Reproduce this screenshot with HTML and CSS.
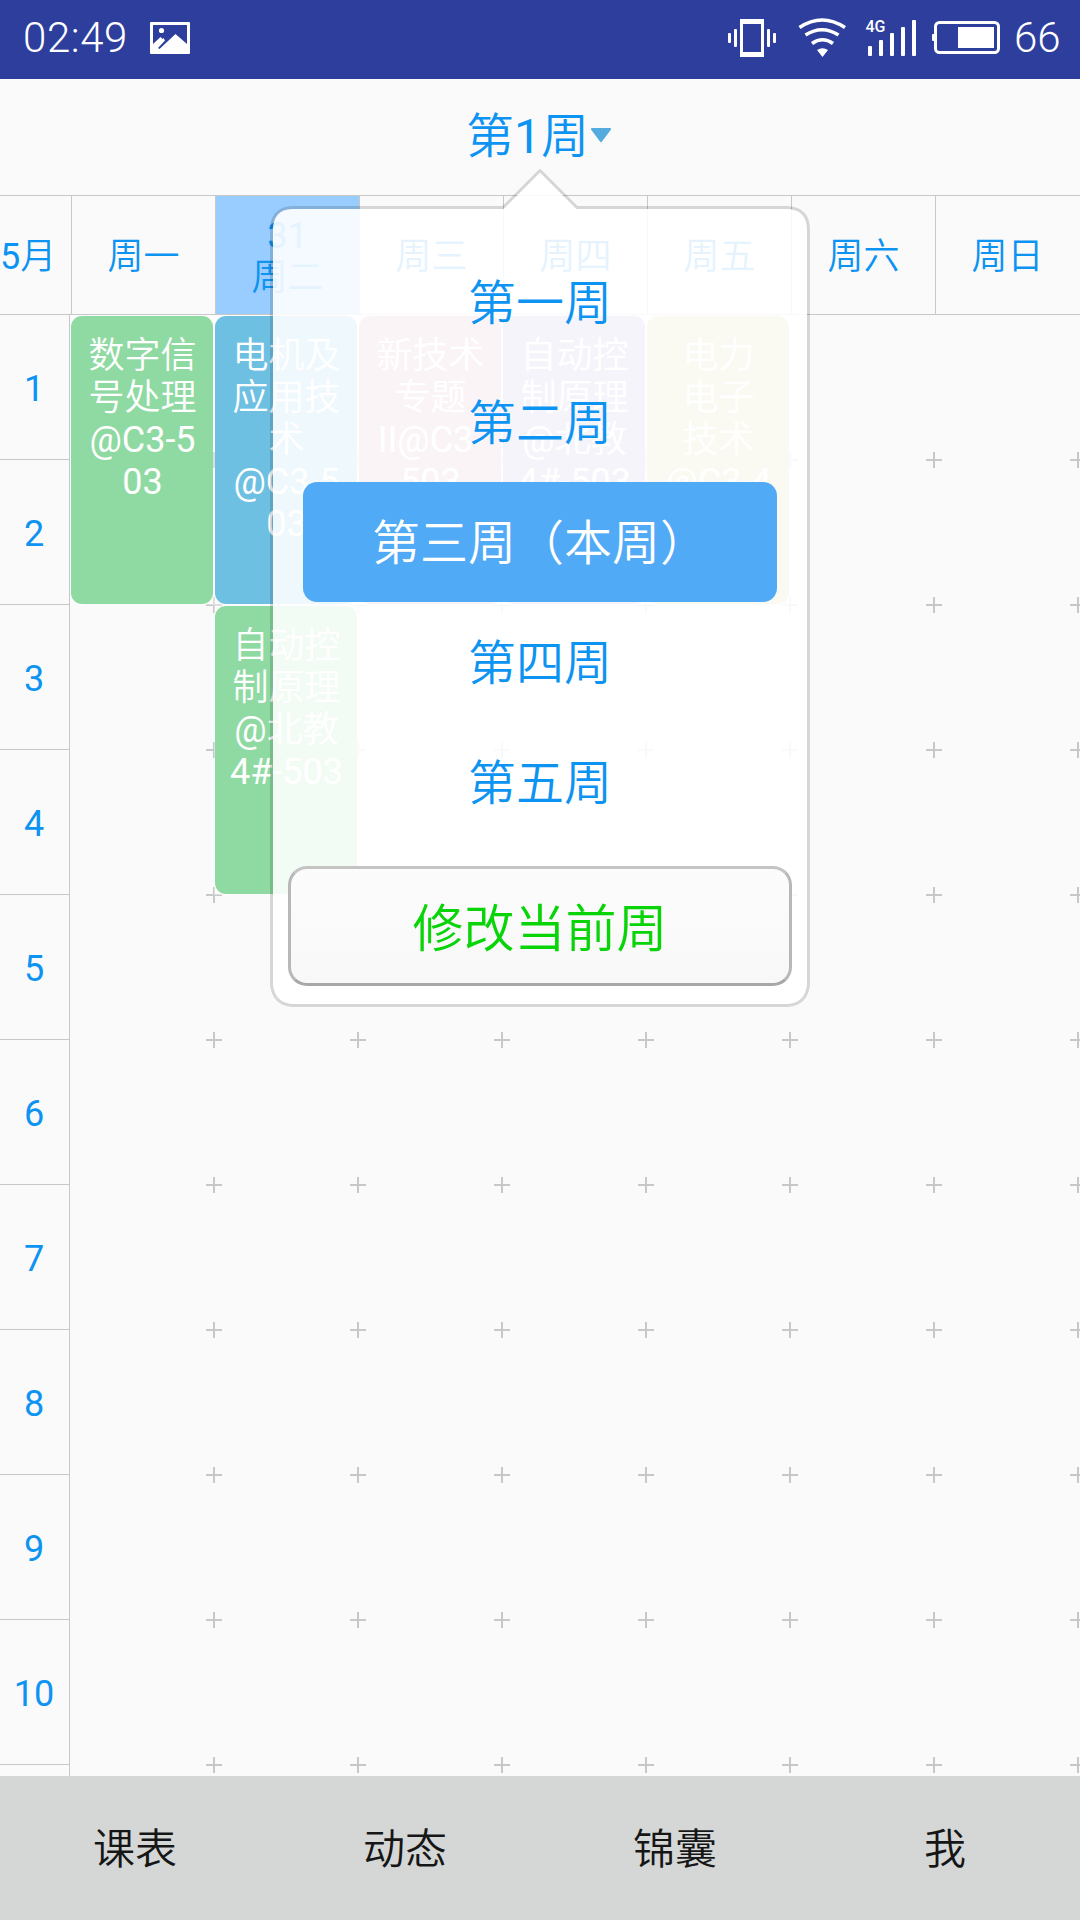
FILE: index.html
```html
<!DOCTYPE html>
<html lang="zh-CN">
<head>
<meta charset="utf-8">
<title>课表</title>
<link rel="stylesheet" href="styles.css">
</head>
<body>
<div class="screen">
  <header class="status">
    <span class="clock">02:49</span>
    <svg class="status-photo" width="40" height="32" viewBox="0 0 40 32">
      <path fill="#fff" fill-rule="evenodd" d="M1 0H39Q40 0 40 1V31Q40 32 39 32H1Q0 32 0 31V1Q0 0 1 0ZM3 3V22L10.500 15 12.500 17 13.500 16 15 18.500 8 26 9.500 27 25.500 12 37 22V3Z"/>
      <circle cx="11.500" cy="8.500" r="2.600" fill="#fff"/>
    </svg>
    <svg class="status-icons" width="274" height="40" viewBox="728 18 274 40" fill="#fff">
      <path fill-rule="evenodd" d="M740 19H764V57H740ZM743 24V52H761V24Z"/>
      <rect x="734" y="29" width="3" height="18" rx="1"/><rect x="728" y="33" width="3" height="10" rx="1"/>
      <rect x="767" y="29" width="3" height="18" rx="1"/><rect x="773" y="33" width="3" height="10" rx="1"/>
      <g fill="none" stroke="#fff" stroke-width="3.600">
        <path d="M799.500 27.500Q822 12.500 845 27.500"/>
        <path d="M805.500 35Q822 24.500 838.500 35"/>
        <path d="M812 43.500Q822.500 36 833 43.500"/>
      </g>
      <path d="M817 50Q822.500 46.500 828 50L822.500 57Z"/>
      <text class="net" x="865.500" y="32">4G</text>
      <rect x="868" y="46" width="4" height="10" rx="1"/><rect x="879" y="40" width="4" height="16" rx="1"/>
      <rect x="890" y="33" width="4" height="23" rx="1"/><rect x="901" y="27" width="4" height="29" rx="1"/>
      <rect x="912" y="20" width="4" height="36" rx="1"/>
      <rect x="935.500" y="22.500" width="63" height="30" rx="4" fill="none" stroke="#fff" stroke-width="3"/>
      <rect x="932" y="34" width="3" height="7" rx="1"/>
      <rect x="958" y="27" width="36" height="21"/>
    </svg>
    <span class="level">66</span>
  </header>

  <div class="titlebar">
    <span>第<span class="num">1</span>周</span>
    <svg class="caret" width="22" height="16" viewBox="0 0 22 16"><path d="M2 1H20Q21.500 1 21 2.500L12 14.500Q11 16 10 14.500L1 2.500Q.5 1 2 1Z" fill="#55aae0"/></svg>
  </div>

  <div class="days">
    <div class="month"><span class="num">5</span>月</div>
    <div class="day">周一</div>
    <div class="day today"><span class="num">31</span><span>周二</span></div>
    <div class="day">周三</div>
    <div class="day">周四</div>
    <div class="day">周五</div>
    <div class="day">周六</div>
    <div class="day">周日</div>
  </div>

  <main class="table">
    <div class="periods">
      <div>1</div><div>2</div><div>3</div><div>4</div><div>5</div><div>6</div><div>7</div><div>8</div><div>9</div><div>10</div><div></div>
    </div>
    <div class="board">
      <svg class="marks" width="938" height="1389">
        <defs><pattern id="plus" width="144" height="145" patternUnits="userSpaceOnUse"><path d="M64 72H80V74H64ZM71 65H73V81H71Z" fill="#c8c8c8"/></pattern></defs>
        <rect width="938" height="1389" fill="url(#plus)"/>
      </svg>
      <div class="column"><div class="slot"><div class="course green">数字信<br>号处理<br><span class="num">@C3-5</span><br><span class="num">03</span></div></div></div>
      <div class="column">
        <div class="slot"><div class="course cyan">电机及<br>应用技<br>术<br><span class="num">@C3-5</span><br><span class="num">03</span></div></div>
        <div class="slot"><div class="course green">自动控<br>制原理<br><span class="num">@</span>北教<br><span class="num">4#-503</span></div></div>
      </div>
      <div class="column"><div class="slot"><div class="course pink">新技术<br>专题<br><span class="num">II@C3-</span><br><span class="num">503</span></div></div></div>
      <div class="column"><div class="slot"><div class="course violet">自动控<br>制原理<br><span class="num">@</span>北教<br><span class="num">4#-503</span></div></div></div>
      <div class="column"><div class="slot"><div class="course olive">电力<br>电子<br>技术<br><span class="num">@C3-4</span></div></div></div>
      <div class="column"></div>
      <div class="column"></div>
    </div>
  </main>

  <nav class="tabs"><span>课表</span><span>动态</span><span>锦囊</span><span>我</span></nav>

  <div class="popup">
    <svg class="bubble" width="540" height="842" viewBox="0 0 540 842">
      <path fill="#fff" fill-opacity=".89" d="M22 42H233.500L270 6 306.500 42H518Q537 42 537 63V818Q537 837 518 837H22Q3 837 3 818V63Q3 42 22 42Z"/>
      <path fill="none" stroke="#000" stroke-opacity=".14" stroke-width="3" stroke-linejoin="round" d="M22 40.500H233L270 3.500 307 40.500H518Q538.500 42 538.500 63V818Q536 837 518 838.500H22Q4 837 1.500 818V63Q1.500 42 22 40.500Z"/>
    </svg>
    <div class="weeks">
      <div class="week">第一周</div>
      <div class="week">第二周</div>
      <div class="week current">第三周（本周）</div>
      <div class="week">第四周</div>
      <div class="week">第五周</div>
    </div>
    <div class="change">修改当前周</div>
  </div>
</div>
</body>
</html>
```
FILE: styles.css
```css
* { box-sizing: border-box; }
body { margin: 0; }
.screen {
  position: relative;
  width: 1080px;
  height: 1920px;
  overflow: hidden;
  display: flex;
  flex-direction: column;
  background: #fafafa;
  color: #0d93f2;
  font-family: Roboto, "Noto Sans CJK SC", sans-serif;
  font-weight: 350;
  font-size: 36px;
  line-height: 42px;
}
.num { font-weight: 400; }
.status {
  flex: none;
  height: 79px;
  display: flex;
  align-items: center;
  padding: 0 18px 3px 23px;
  background: #2d3e9d;
  color: #fff;
  font-size: 42px;
}
.clock { width: 127px; letter-spacing: .6px; }
.status-icons { margin-left: auto; }
.net { font: 500 16px Roboto, sans-serif; }
.level { width: 48px; margin-left: 12px; white-space: nowrap; }
.titlebar {
  flex: none;
  height: 116px;
  display: flex;
  align-items: center;
  justify-content: center;
  padding-right: 2px;
  font-size: 48px;
  line-height: 56px;
}
.caret { margin: 0 0 5px 1px; }
.days {
  flex: none;
  height: 120px;
  display: flex;
  border-top: 1px solid #c8c8c8;
  border-bottom: 1px solid #c8c8c8;
}
.month { width: 71px; display: flex; align-items: center; white-space: nowrap; padding-top: 4px; }
.day {
  width: 144px;
  display: flex;
  flex-direction: column;
  align-items: center;
  justify-content: center;
  padding-top: 4px;
  border-left: 1px solid #c8c8c8;
}
.today { background: #99ccff; }
.table { flex: none; height: 1461px; display: flex; overflow: hidden; }
.periods { width: 70px; height: 1595px; border-right: 1px solid #c8c8c8; font-weight: 400; }
.periods div {
  height: 145px;
  display: flex;
  align-items: center;
  justify-content: center;
  padding: 4px 1px 0 0;
  border-bottom: 1px solid #c8c8c8;
}
.board { position: relative; width: 1010px; display: flex; }
.marks { position: absolute; left: 72px; top: 72px; }
.column { position: relative; width: 144px; flex: none; }
.slot { height: 290px; padding: 1px; background: rgba(255,255,255,.4); }
.course {
  width: 142px;
  height: 288px;
  border-radius: 11px;
  padding: 19px 0 0 1px;
  text-align: center;
  color: #fff;
}
.green { background: rgba(137,216,157,.95); }
.cyan { background: rgba(102,189,226,.95); }
.pink { background: #d29bad; }
.violet { background: #a49bd2; }
.olive { background: #d2d28a; }
.tabs {
  flex: none;
  height: 144px;
  display: flex;
  align-items: center;
  padding-top: 4px;
  background: #d5d7d6;
  color: #161616;
  font-size: 42px;
}
.tabs span { flex: 1; text-align: center; }
.popup {
  position: absolute;
  left: 270px;
  top: 167px;
  width: 540px;
  height: 842px;
  padding-top: 75px;
}
.bubble { position: absolute; left: 0; top: 0; }
.weeks { position: relative; padding: 0 33px; }
.week {
  height: 120px;
  display: flex;
  align-items: center;
  justify-content: center;
  padding-top: 3px;
  font-size: 48px;
}
.current { background: #51aaf5; color: #fff; border-radius: 14px; }
.change {
  position: relative;
  height: 120px;
  margin: 24px 18px 0;
  display: flex;
  align-items: center;
  justify-content: center;
  padding-top: 7px;
  border: 3px solid;
  border-color: #c4c4c4 #b8b8b8 #a8a8a8;
  border-radius: 19px;
  background: linear-gradient(#fcfcfc, #f8f8f8);
  color: #08d408;
  font-size: 51px;
}
```
